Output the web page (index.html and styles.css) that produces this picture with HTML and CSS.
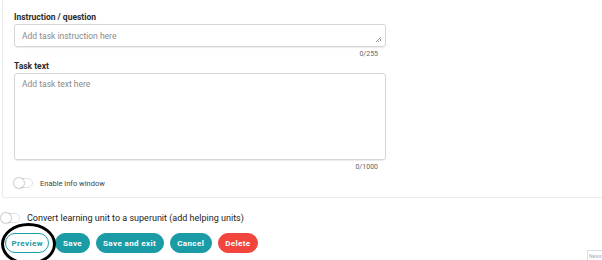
FILE: index.html
```html
<!doctype html>
<html lang="en">
  <head>
    <meta charset="UTF-8" />
    <meta name="viewport" content="width=device-width, initial-scale=1.0" />
    <title>Edit task</title>
    <link rel="stylesheet" href="styles.css">
  </head>
  <body>
    <div class="card">
      <div class="field">
        <label class="field-label">Instruction / question</label>
        <div class="input-box">
          <span class="placeholder">Add task instruction here</span>
          <span class="grip"></span>
        </div>
        <div class="counter">0/255</div>
      </div>
      <div class="field">
        <label class="field-label">Task text</label>
        <div class="input-box textarea">
          <span class="placeholder">Add task text here</span>
        </div>
        <div class="counter">0/1000</div>
      </div>
      <div class="switch-row">
        <span class="switch"></span>
        <span class="switch-text">Enable info window</span>
      </div>
    </div>

    <div class="switch-row super">
      <span class="switch"></span>
      <span class="super-text">Convert learning unit to a superunit (add helping units)</span>
    </div>

    <div class="actions">
      <button class="btn btn-outline">Preview</button>
      <button class="btn">Save</button>
      <button class="btn">Save and exit</button>
      <button class="btn">Cancel</button>
      <button class="btn btn-red">Delete</button>
      <span class="ring"></span>
    </div>

    <div class="news">News</div>
  </body>
</html>
```

FILE: styles.css
```css
body {
  margin: 0;
  background: #fff;
  font-family: Roboto, "Liberation Sans", sans-serif;
  color: #333;
  height: 260px;
  overflow: hidden;
  position: relative;
}
.card {
  margin-left: 2px;
  border: 1px solid #ececec;
  border-top: none;
  border-right: none;
  border-radius: 0 0 0 3px;
  padding: 12px 0 9px 11px;
}
.field {
  width: 372px;
}
.field-label {
  display: block;
  font-size: 8.5px;
  font-weight: bold;
  color: #2b2b2b;
  margin-bottom: 2px;
}
.input-box {
  position: relative;
  display: flex;
  align-items: center;
  height: 23px;
  border: 1px solid #d6d6d6;
  border-radius: 3px;
  box-shadow: 0 1px 1px rgba(0, 0, 0, 0.08);
  padding: 0 7px;
  box-sizing: border-box;
}
.input-box.textarea {
  align-items: flex-start;
  height: 87px;
  padding-top: 5px;
}
.placeholder {
  font-size: 8.5px;
  color: #8a8a8a;
}
.grip {
  position: absolute;
  right: 4px;
  bottom: 4px;
  width: 5px;
  height: 5px;
  background: linear-gradient(135deg, transparent 45%, #999 45%, #999 55%, transparent 55%, transparent 70%, #999 70%, #999 80%, transparent 80%);
}
.counter {
  text-align: right;
  font-size: 7px;
  color: #666;
  padding-right: 8px;
  margin: 3px 0 3px;
}
.switch-row {
  display: flex;
  align-items: center;
  gap: 7px;
  margin-top: 7px;
}
.switch {
  width: 19px;
  height: 10px;
  border: 1px solid #e2e2e2;
  border-radius: 6px;
  box-sizing: border-box;
  position: relative;
  background: #fff;
}
.switch::before {
  content: "";
  position: absolute;
  left: -1px;
  top: -1px;
  width: 10px;
  height: 10px;
  border-radius: 50%;
  background: #fff;
  box-shadow: 0 0 1px 1px rgba(0, 0, 0, 0.2);
}
.switch-text {
  font-size: 7.5px;
  color: #444;
}
.super {
  margin: 15px 0 0 1px;
}
.super-text {
  font-size: 9px;
  color: #222;
}
.actions {
  position: relative;
  display: flex;
  gap: 6px;
  margin: 10px 0 0 5px;
}
.btn {
  font-family: Roboto, "Liberation Sans", sans-serif;
  font-size: 8px;
  font-weight: bold;
  letter-spacing: 0.4px;
  color: #fff;
  background: #1b9ba6;
  border: 1.5px solid #1b9ba6;
  border-radius: 10px;
  height: 20px;
  padding: 0 6.5px;
}
.btn-outline {
  background: #fff;
  color: #1b9ba6;
  padding: 0 5.5px;
}
.btn-red {
  background: #f2453d;
  border-color: #f2453d;
}
.ring {
  position: absolute;
  left: -4px;
  top: -10px;
  width: 55px;
  height: 42px;
  border: 3px solid #000;
  border-radius: 50%;
  box-sizing: border-box;
}
.news {
  position: absolute;
  right: 0;
  bottom: 0;
  width: 15px;
  height: 10px;
  border: 1px solid #ddd;
  border-right: none;
  border-bottom: none;
  font-size: 5px;
  color: #aaa;
  overflow: hidden;
  padding: 2px 0 0 1px;
  box-sizing: border-box;
}
```
